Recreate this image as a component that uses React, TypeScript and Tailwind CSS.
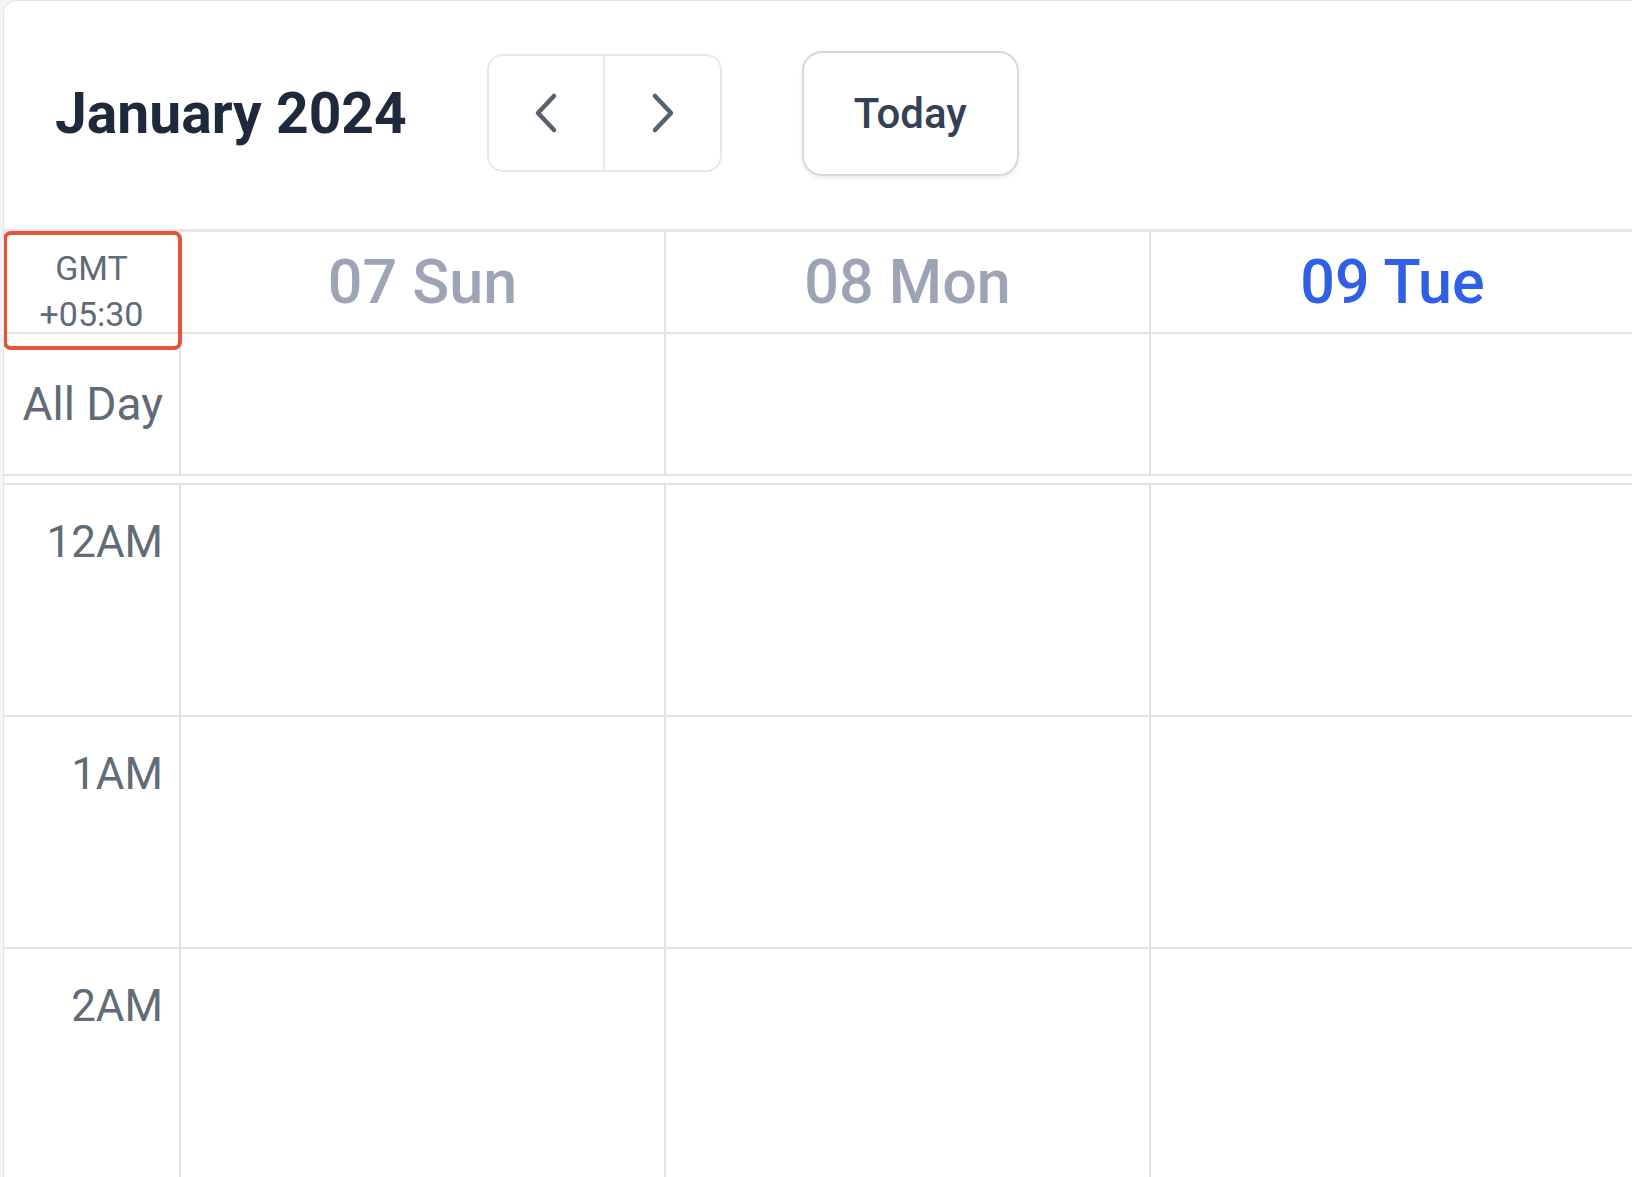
import React from "react";

const days = [
  { label: "07 Sun", today: false },
  { label: "08 Mon", today: false },
  { label: "09 Tue", today: true },
];

const hours = ["12AM", "1AM", "2AM"];

function Chevron({ dir }: { dir: "left" | "right" }) {
  return (
    <svg width="28" height="44" viewBox="0 0 28 44" fill="none">
      <path
        d={dir === "left" ? "M22 5 L6 22 L22 39" : "M6 5 L22 22 L6 39"}
        stroke="#56626e"
        strokeWidth="4.5"
        strokeLinecap="round"
        strokeLinejoin="round"
      />
    </svg>
  );
}

export default function App() {
  return (
    <div className="h-[1177px] w-[1632px] overflow-hidden bg-[#f3f4f6] pl-[3px] font-['Roboto',sans-serif]">
      <div className="h-full overflow-hidden rounded-tl-[14px] border-l border-t border-[#e3e5e9] bg-white">
        {/* toolbar */}
        <header className="flex h-[231px] items-center gap-[80px] border-b-[3px] border-[#e5e7eb] pb-[4px] pl-[51px]">
          <h1 className="text-[57px] font-bold leading-none text-[#1e293b]">January 2024</h1>
          <div className="flex h-[118px] w-[235px] overflow-hidden rounded-[16px] border-2 border-[#e6e8eb]">
            <button className="flex flex-1 items-center justify-center border-r-2 border-[#e6e8eb]">
              <Chevron dir="left" />
            </button>
            <button className="flex flex-1 items-center justify-center">
              <Chevron dir="right" />
            </button>
          </div>
          <button className="flex h-[125px] w-[217px] items-center justify-center rounded-[20px] border-2 border-[#d5d9df] text-[42px] font-medium text-[#334155] shadow-[0_2px_4px_rgba(0,0,0,0.08)]">
            Today
          </button>
        </header>

        {/* day headers */}
        <div className="grid grid-cols-[177px_485px_485px_485px]">
          <div className="relative h-[102px] border-r-2 border-b-2 border-[#e2e2e2] pt-[13px] text-center text-[34px] leading-[46px] text-[#5f6b76]">
            <div>GMT</div>
            <div>+05:30</div>
            <div className="pointer-events-none absolute left-[-1px] top-[-1px] h-[119px] w-[179px] rounded-[8px] border-4 border-[#e5533b]" />
          </div>
          {days.map((d) => (
            <div
              key={d.label}
              className={`flex h-[102px] items-center justify-center border-r-2 border-b-2 border-[#e2e2e2] text-[61px] font-medium leading-none ${
                d.today ? "text-[#2f5fe4]" : "text-[#9ca4b5]"
              }`}
            >
              {d.label}
            </div>
          ))}

          {/* all day row */}
          <div className="flex h-[142px] items-center justify-end border-r-2 border-b-2 border-[#e2e2e2] pr-[16px] text-[46px] leading-none text-[#5f6b76]">
            All Day
          </div>
          {days.map((d) => (
            <div key={d.label} className="h-[142px] border-r-2 border-b-2 border-[#e2e2e2]" />
          ))}
        </div>

        {/* hour grid */}
        <div className="mt-[7px] grid grid-cols-[177px_485px_485px_485px] border-t-2 border-[#e2e2e2]">
          {hours.map((h) => (
            <React.Fragment key={h}>
              <div className="h-[232px] border-r-2 border-b-2 border-[#e2e2e2] pr-[16px] pt-[35px] text-right text-[44px] leading-none text-[#5f6b76]">
                {h}
              </div>
              {days.map((d) => (
                <div key={d.label} className="h-[232px] border-r-2 border-b-2 border-[#e2e2e2]" />
              ))}
            </React.Fragment>
          ))}
        </div>
      </div>
    </div>
  );
}
